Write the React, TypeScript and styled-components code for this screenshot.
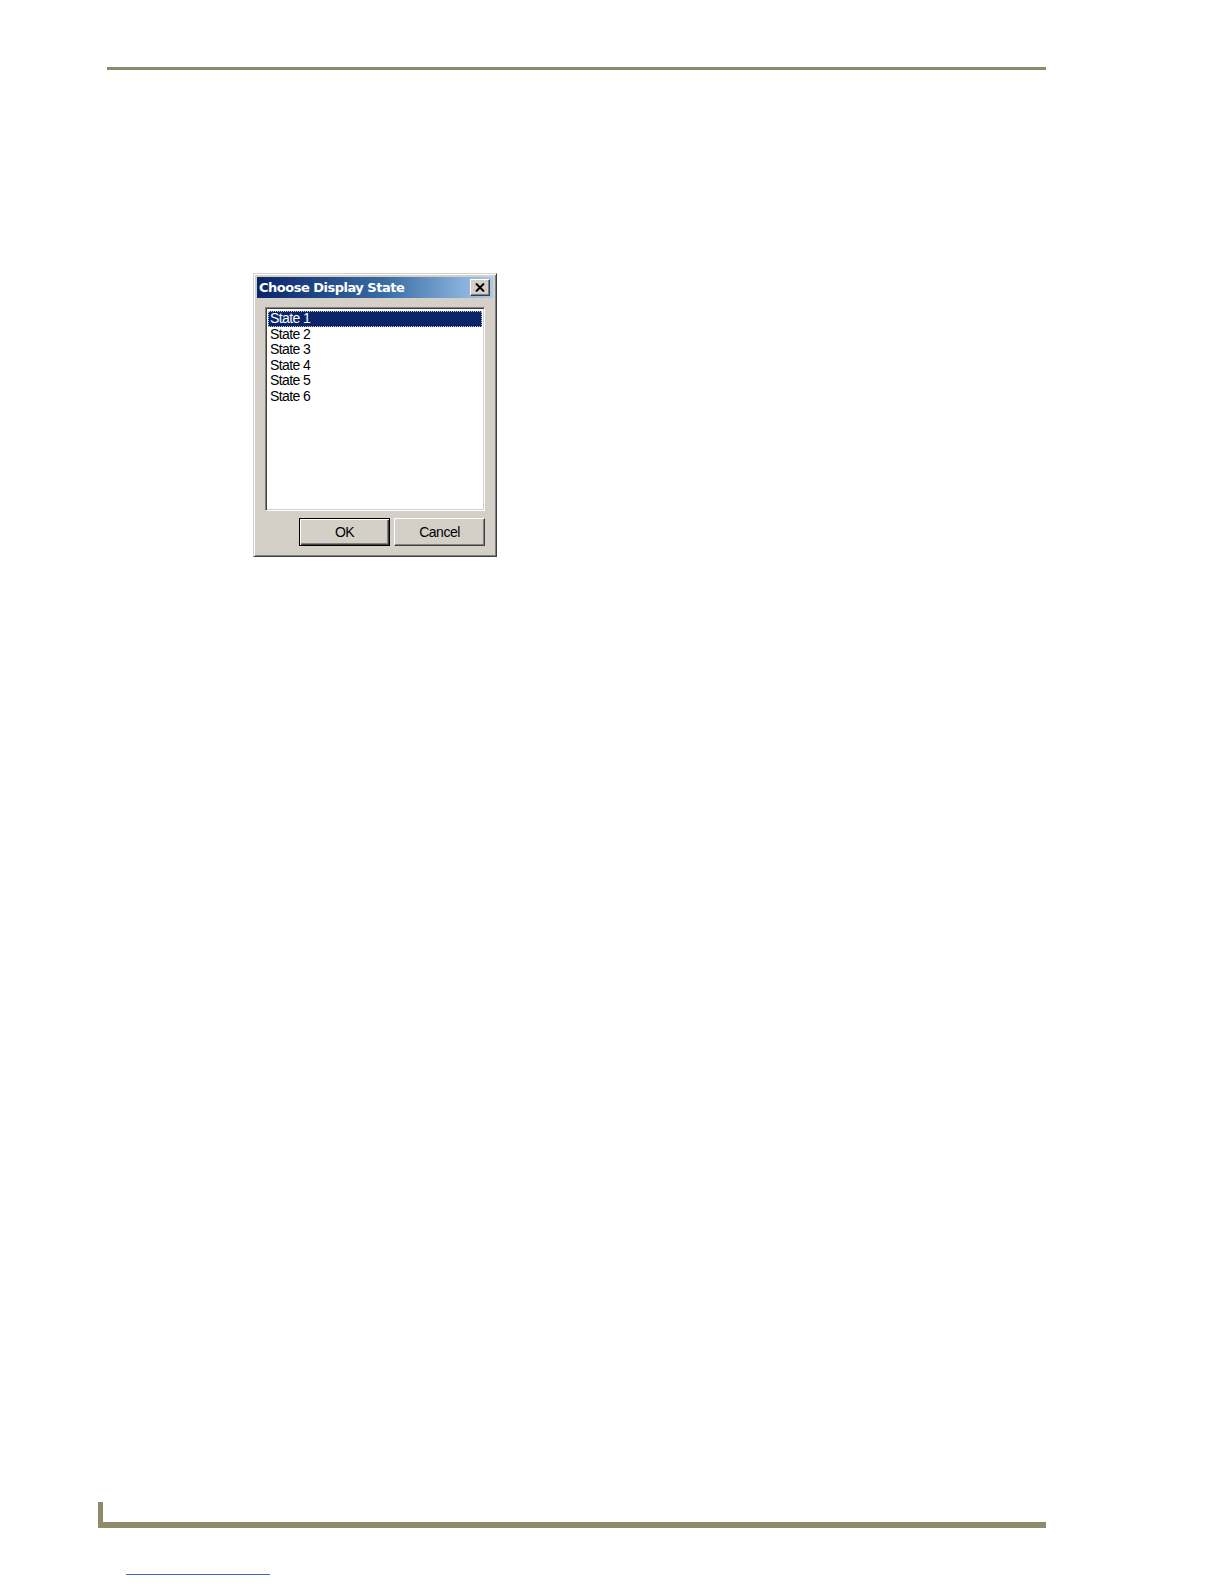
import styled, { createGlobalStyle } from "styled-components";
import type { FunctionComponent } from "react";

// Global page reset
const GlobalStyle = createGlobalStyle`
    html, body {
        margin: 0;
        padding: 0;
        background: #ffffff;
        overflow: hidden;
    }
    body {
        font-family: "Liberation Sans", Arial, sans-serif;
    }
`;

// Page frame
const Page = styled.main`
    width: 100%;
    max-width: 1224px;
    height: 1584px;
    display: flex;
    flex-direction: column;
    box-sizing: border-box;
    padding-top: 67px;
    padding-bottom: 9px;
    overflow: hidden;
`;
const HeaderRule = styled.div`
    margin-left: 107px;
    width: 939px;
    height: 3px;
    background: #8b8a6e;
`;
const FooterRule = styled.div`
    margin-top: auto;
    margin-left: 98px;
    width: 948px;
    height: 26px;
    box-sizing: border-box;
    border-left: 5px solid #8f8a6a;
    border-bottom: 6px solid #8f8a6a;
`;
const FooterLink = styled.div`
    margin-top: 46px;
    margin-left: 126px;
    width: 144px;
    height: 1px;
    background: #4a5fc8;
`;

// Dialog window
const Dialog = styled.section`
    margin-top: 203px;
    margin-left: 253px;
    width: 244px;
    height: 284px;
    box-sizing: border-box;
    background: #d4d0c8;
    border: 1px solid;
    border-color: #d4d0c8 #404040 #404040 #d4d0c8;
    box-shadow: inset 1px 1px 0 #ffffff, inset -1px -1px 0 #808080;
    padding: 3px;
    display: flex;
    flex-direction: column;
`;
const TitleBar = styled.header`
    height: 23px;
    display: flex;
    align-items: center;
    justify-content: space-between;
    padding: 0 3px 0 2px;
    background: linear-gradient(90deg, #0a246a 0%, #3a6ea5 55%, #a6caf0 100%);
`;
const Title = styled.span`
    color: #ffffff;
    font-family: "DejaVu Sans", Verdana, sans-serif;
    font-weight: bold;
    font-size: 13px;
    letter-spacing: -0.5px;
`;
const CloseButton = styled.button`
    width: 20px;
    height: 17px;
    padding: 0;
    box-sizing: border-box;
    display: flex;
    align-items: center;
    justify-content: center;
    background: #d4d0c8;
    border: 1px solid;
    border-color: #ffffff #404040 #404040 #ffffff;
    box-shadow: inset -1px -1px 0 #808080;
`;
const Body = styled.div`
    flex: 1;
    display: flex;
    flex-direction: column;
    padding: 9px 8px 7px 8px;
    gap: 7px;
`;
const ListBox = styled.ul`
    margin: 0;
    list-style: none;
    height: 204px;
    box-sizing: border-box;
    background: #ffffff;
    border: 1px solid;
    border-color: #808080 #ffffff #ffffff #808080;
    box-shadow: inset 1px 1px 0 #404040, inset -1px -1px 0 #d4d0c8;
    padding: 3px 2px 2px 2px;
`;
const ListItem = styled.li<{ $selected?: boolean }>`
    height: 15.6px;
    line-height: 15.6px;
    padding-left: 2px;
    box-sizing: border-box;
    font-family: "Liberation Sans", Arial, sans-serif;
    font-size: 14px;
    letter-spacing: -0.6px;
    color: ${(p) => (p.$selected ? "#ffffff" : "#000000")};
    background: ${(p) => (p.$selected ? "#0a246a" : "transparent")};
    outline: ${(p) => (p.$selected ? "1px dotted #c8c8c8" : "none")};
    outline-offset: -1px;
`;
const ButtonRow = styled.div`
    display: flex;
    justify-content: flex-end;
    gap: 4px;
`;
const PushButton = styled.button<{ $default?: boolean }>`
    width: 91px;
    height: 28px;
    box-sizing: border-box;
    background: #d4d0c8;
    font-family: "Liberation Sans", Arial, sans-serif;
    font-size: 14px;
    letter-spacing: -0.5px;
    color: #000000;
    padding: 0;
    border: 1px solid;
    border-color: ${(p) =>
        p.$default ? "#000000" : "#ffffff #404040 #404040 #ffffff"};
    box-shadow: ${(p) =>
        p.$default
            ? "inset 1px 1px 0 #ffffff, inset -1px -1px 0 #404040, inset -2px -2px 0 #808080"
            : "inset -1px -1px 0 #808080"};
`;

const states = ["State 1", "State 2", "State 3", "State 4", "State 5", "State 6"];

const App: FunctionComponent = () => {
    return (
        <>
            <GlobalStyle />
            <Page>
                <HeaderRule />
                <Dialog>
                    <TitleBar>
                        <Title>Choose Display State</Title>
                        <CloseButton aria-label="Close">
                            <svg width="10" height="9" viewBox="0 0 10 9">
                                <path d="M1 0.5 L9 8.5 M9 0.5 L1 8.5" stroke="#000" strokeWidth="2" />
                            </svg>
                        </CloseButton>
                    </TitleBar>
                    <Body>
                        <ListBox>
                            {states.map((s, i) => (
                                <ListItem key={s} $selected={i === 0}>
                                    {s}
                                </ListItem>
                            ))}
                        </ListBox>
                        <ButtonRow>
                            <PushButton $default>OK</PushButton>
                            <PushButton>Cancel</PushButton>
                        </ButtonRow>
                    </Body>
                </Dialog>
                <FooterRule />
                <FooterLink />
            </Page>
        </>
    );
};

export default App;
